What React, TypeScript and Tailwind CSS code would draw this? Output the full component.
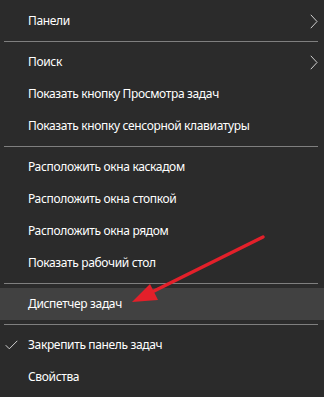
import React from "react";

type Item = { label: string; sub?: boolean; checked?: boolean; active?: boolean };

const groups: Item[][] = [
  [{ label: "Панели", sub: true }],
  [
    { label: "Поиск", sub: true },
    { label: "Показать кнопку Просмотра задач" },
    { label: "Показать кнопку сенсорной клавиатуры" },
  ],
  [
    { label: "Расположить окна каскадом" },
    { label: "Расположить окна стопкой" },
    { label: "Расположить окна рядом" },
    { label: "Показать рабочий стол" },
  ],
  [{ label: "Диспетчер задач", active: true }],
  [{ label: "Закрепить панель задач", checked: true }, { label: "Свойства" }],
];

const Row = ({ item }: { item: Item }) => (
  <div
    className={`relative flex h-[32px] items-center pl-[28px] text-[12px] tracking-[-0.35px] text-white ${
      item.active ? "bg-[#414141]" : ""
    }`}
  >
    {item.checked && (
      <svg className="absolute left-[5px] top-[11px]" width="13" height="10" viewBox="0 0 13 10">
        <path d="M0.7 5.2 L4.3 8.8 L12.3 0.8" fill="none" stroke="#d0d0d0" strokeWidth="1" />
      </svg>
    )}
    <span>{item.label}</span>
    {item.sub && (
      <svg className="absolute right-[6px] top-[9px]" width="8" height="15" viewBox="0 0 8 15">
        <path d="M0.8 0.8 L7 7.5 L0.8 14.2" fill="none" stroke="#d0d0d0" strokeWidth="1" />
      </svg>
    )}
  </div>
);

export default function App() {
  return (
    <div
      className="relative h-[397px] w-[324px] overflow-hidden bg-[#2b2b2b] pt-[5px]"
      style={{ fontFamily: '"Noto Sans", "Open Sans", sans-serif' }}
    >
      {groups.map((group, gi) => (
        <div key={gi}>
          {gi > 0 && (
            <div className="py-[4px] pl-[4px] pr-[6px]">
              <div className="h-px bg-[#7f7f7f]" />
            </div>
          )}
          {group.map((item) => (
            <Row key={item.label} item={item} />
          ))}
        </div>
      ))}

      {/* red annotation arrow */}
      <svg className="pointer-events-none absolute left-0 top-0" width="324" height="397" viewBox="0 0 324 397">
        <line x1="263" y1="237" x2="150" y2="293" stroke="#e3202a" strokeWidth="3.5" strokeLinecap="round" />
        <polygon points="132,302 150,284 158,300" fill="#e3202a" />
      </svg>
    </div>
  );
}
